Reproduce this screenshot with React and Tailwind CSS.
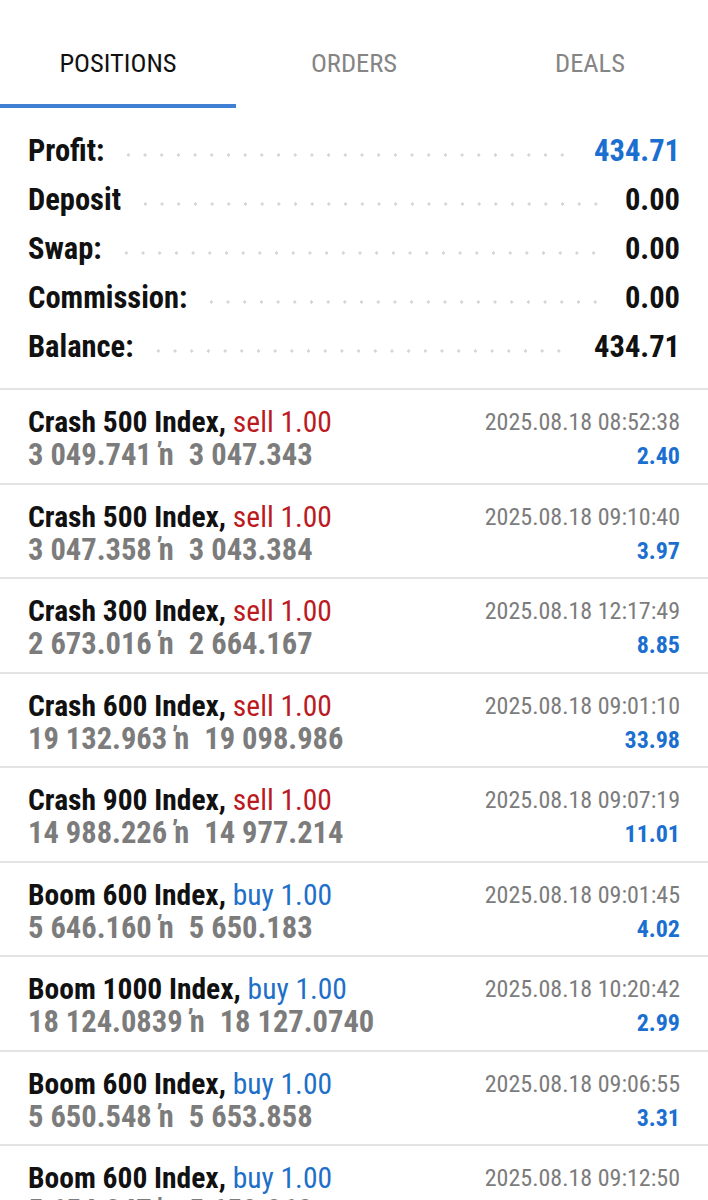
import React from "react"

const font = { fontFamily: '"Roboto Condensed", Roboto, "Liberation Sans", sans-serif' }

const summary = [
  { label: "Profit:", value: "434.71", blue: true },
  { label: "Deposit", value: "0.00" },
  { label: "Swap:", value: "0.00" },
  { label: "Commission:", value: "0.00" },
  { label: "Balance:", value: "434.71" },
]

const positions = [
  ["Crash 500 Index,", "sell 1.00", "3 049.741", "3 047.343", "2025.08.18 08:52:38", "2.40"],
  ["Crash 500 Index,", "sell 1.00", "3 047.358", "3 043.384", "2025.08.18 09:10:40", "3.97"],
  ["Crash 300 Index,", "sell 1.00", "2 673.016", "2 664.167", "2025.08.18 12:17:49", "8.85"],
  ["Crash 600 Index,", "sell 1.00", "19 132.963", "19 098.986", "2025.08.18 09:01:10", "33.98"],
  ["Crash 900 Index,", "sell 1.00", "14 988.226", "14 977.214", "2025.08.18 09:07:19", "11.01"],
  ["Boom 600 Index,", "buy 1.00", "5 646.160", "5 650.183", "2025.08.18 09:01:45", "4.02"],
  ["Boom 1000 Index,", "buy 1.00", "18 124.0839", "18 127.0740", "2025.08.18 10:20:42", "2.99"],
  ["Boom 600 Index,", "buy 1.00", "5 650.548", "5 653.858", "2025.08.18 09:06:55", "3.31"],
  ["Boom 600 Index,", "buy 1.00", "5 654.347", "5 658.860", "2025.08.18 09:12:50", "4.51"],
]

const Tabs = () => (
  <div className="flex h-[109px]">
    {["POSITIONS", "ORDERS", "DEALS"].map((t, i) => (
      <div key={t} className="flex-1 flex flex-col">
        <div className={`flex-1 flex items-center justify-center pt-[22px] text-[26.5px] font-stretch-condensed ${i === 0 ? "text-[#111]" : "text-[#858585]"}`}>
          {t}
        </div>
        <div className={`h-[4px] mb-[1px] ${i === 0 ? "bg-[#3f7fd4]" : ""}`} />
      </div>
    ))}
  </div>
)

const Summary = () => (
  <div className="pt-[17px] pb-[17px] px-[28px] border-b-2 border-[#e4e4e4]">
    {summary.map((s) => (
      <div key={s.label} className="flex items-center h-[49px] text-[30.5px] font-bold font-stretch-condensed">
        <span className="text-[#111]">{s.label}</span>
        <div className="flex-1 h-[4px] mt-[8px] ml-[16px] mr-[20px] bg-[radial-gradient(circle,#d6d6d6_1.5px,transparent_1.7px)] bg-[length:16.7px_4px] bg-repeat-x" />
        <span className={s.blue ? "text-[#1a6fd0]" : "text-[#111]"}>{s.value}</span>
      </div>
    ))}
  </div>
)

const Row = ({ p }) => {
  const sell = p[1].startsWith("sell")
  return (
    <div className="h-[94.5px] border-b-2 border-[#e4e4e4] px-[28px] flex font-stretch-condensed">
      <div className="flex-1 flex flex-col pt-[15px]">
        <div className="text-[29.5px] leading-[34px]">
          <span className="font-bold text-[#111]">{p[0]}</span>{" "}
          <span className={sell ? "text-[#bb1a1f]" : "text-[#1e6fc8]"}>{p[1]}</span>
        </div>
        <div className="text-[30.5px] leading-[32px] font-bold text-[#7c7c7c] flex items-baseline">
          <span>{p[2]}</span>
          <span className="ml-[7px] mr-[15px]">ŉ</span>
          <span>{p[3]}</span>
        </div>
      </div>
      <div className="flex flex-col items-end pt-[17px]">
        <div className="text-[24px] leading-[30px] text-[#7c7c7c]">{p[4]}</div>
        <div className="text-[24px] leading-[30px] mt-[4px] font-bold text-[#1a6fd0]">{p[5]}</div>
      </div>
    </div>
  )
}

export default function App() {
  return (
    <div className="w-[708px] h-[1200px] overflow-hidden bg-white" style={font}>
      <Tabs />
      <Summary />
      {positions.map((p, i) => (
        <Row key={i} p={p} />
      ))}
    </div>
  )
}
